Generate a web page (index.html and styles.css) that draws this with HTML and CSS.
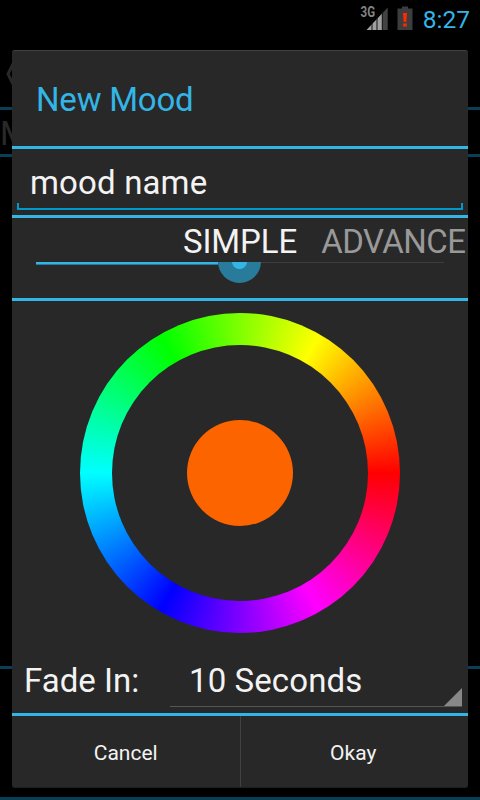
FILE: index.html
```html
<!DOCTYPE html>
<html lang="en">
<head>
<meta charset="utf-8">
<title>New Mood</title>
<link rel="stylesheet" href="styles.css">
</head>
<body>
<div class="screen">
  <div class="backdrop">
    <div class="back-bar">
      <svg width="16" height="26" viewBox="0 0 16 26"><path d="M14 1 8 13 14 25" fill="none" stroke="#292929" stroke-width="3"/></svg>
    </div>
    <div class="back-tabs">M</div>
    <div class="back-list"></div>
    <div class="back-footer"></div>
  </div>
  <header class="status">
    <svg class="signal" width="29" height="26" viewBox="0 0 29 26">
      <text x="0.500" y="11.300" class="network" textLength="14.500" lengthAdjust="spacingAndGlyphs">3G</text>
      <path d="M6.500 24 22.500 7V24Z" fill="#a0a0a0"/>
      <path d="M23 6.500 27.700 1.500V24H23Z" fill="#424242"/>
      <path d="M12 14V24M17 10V24M22.300 5V24" stroke="#111" stroke-width="1"/>
    </svg>
    <svg class="battery" width="16" height="25" viewBox="0 0 16 25">
      <path d="M.500 2.500H5V.500H11V2.500H15.500V24H.500Z" fill="#3d3d3d"/>
      <path d="M6 7H10L9.300 16H6.700ZM6.200 17.500H9.800V20.500H6.200Z" fill="#ff2a00"/>
    </svg>
    <span class="clock">8:27</span>
  </header>
  <main class="dialog">
    <h1 class="title"><span>New Mood</span></h1>
    <div class="name-row"><div class="field"><span>mood name</span></div></div>
    <div class="mode-row">
      <div class="modes"><span class="simple">SIMPLE</span><span class="advanced">ADVANCED</span></div>
      <div class="slider"><div class="progress"></div><div class="thumb"></div></div>
    </div>
    <div class="wheel-row"><div class="wheel"><div class="hole"><div class="swatch"></div></div></div></div>
    <div class="fade-row">
      <span class="fade-label">Fade In:</span>
      <div class="spinner"><span class="duration">10 Seconds</span><i class="corner"></i></div>
    </div>
    <div class="buttons"><div class="button"><span class="cancel">Cancel</span></div><div class="button"><span class="okay">Okay</span></div></div>
  </main>
</div>
</body>
</html>
```
FILE: styles.css
```css
* { box-sizing: border-box; }
body { margin: 0; background: #000; }
.screen {
  position: relative;
  width: 480px;
  height: 800px;
  overflow: hidden;
  background: #000;
  color: #f3f3f3;
  font: 33px/40px Roboto, sans-serif;
  white-space: nowrap;
}
.backdrop {
  position: absolute;
  inset: 0;
  display: flex;
  flex-direction: column;
  padding-top: 38px;
}
.backdrop > div { border-bottom: 3px solid #083f54; }
.back-bar { height: 72px; padding-top: 23px; line-height: 0; }
.back-tabs { height: 47px; line-height: 48px; color: #292929; }
.back-list { height: 512px; }
.back-footer { height: 131px; }
.status {
  position: relative;
  display: flex;
  justify-content: flex-end;
  align-items: flex-start;
  height: 38px;
  padding: 6px 10px 0 0;
}
.network { font: bold 14.5px Roboto, sans-serif; fill: #858585; }
.signal { margin-right: 8px; overflow: visible; }
.battery { margin-right: 10px; }
.clock { color: #33b5e5; font-size: 24.5px; line-height: 28px; }
.dialog {
  position: relative;
  display: flex;
  flex-direction: column;
  width: 456px;
  height: 738px;
  margin: 12px 12px 0;
  overflow: hidden;
  background: #282828;
  border-top: 1px solid #414141;
  border-bottom: 1px solid #1f1f1f;
  border-radius: 3px;
}
.dialog > * { flex: none; }
.title {
  height: 98px;
  margin: 0;
  padding: 29px 24px 0;
  border-bottom: 3px solid #33b5e5;
  font: inherit;
  letter-spacing: -0.2px;
  color: #33b5e5;
}
.name-row { height: 69px; padding: 0 5px; border-bottom: 3px solid #33b5e5; }
.field {
  height: 61px;
  padding: 14px 13px 0;
  border-bottom: 2px solid #0099cc;
  letter-spacing: 0.15px;
  background:
    linear-gradient(#0099cc, #0099cc) left bottom / 2px 5px no-repeat,
    linear-gradient(#0099cc, #0099cc) right bottom / 2px 5px no-repeat;
}
.mode-row { height: 83px; border-bottom: 3px solid #33b5e5; }
.modes { display: flex; height: 44px; padding: 4px 0 0 171px; overflow: hidden; }
.simple { margin-right: 24px; letter-spacing: -0.1px; }
.advanced { color: #999; letter-spacing: -0.5px; }
.slider {
  display: flex;
  height: 28px;
  margin: 0 24px;
  overflow: hidden;
  background: linear-gradient(#3e3e3e, #3e3e3e) left top / 409px 1px no-repeat;
}
.progress { width: 182px; height: 3px; background: #33b5e5; border-bottom: 1px solid #287b9a; }
.thumb {
  width: 43px;
  height: 43px;
  margin-top: -22px;
  border-radius: 50%;
  background: radial-gradient(circle, #33b5e5 0 7px, #287b9a 8px);
}
.wheel-row { height: 347px; padding-top: 12px; }
.wheel {
  width: 320px;
  height: 320px;
  margin: 0 auto;
  padding: 32px;
  border-radius: 50%;
  background: conic-gradient(from 90deg, #f00, #f0f, #00f, #0ff, #0f0, #ff0, #f00);
}
.hole {
  display: flex;
  align-items: center;
  justify-content: center;
  width: 256px;
  height: 256px;
  border-radius: 50%;
  background: #282828;
}
.swatch { width: 106px; height: 106px; border-radius: 50%; background: #fc6400; }
.fade-row {
  display: flex;
  height: 68px;
  padding: 0 6px 0 12px;
  border-bottom: 3px solid #33b5e5;
}
.fade-label { width: 146px; padding-top: 13px; }
.spinner {
  display: flex;
  justify-content: space-between;
  align-items: flex-end;
  width: 292px;
  height: 59px;
  padding-left: 19px;
  border-bottom: 1px solid #555;
}
.duration { height: 45px; letter-spacing: 0.1px; }
.corner { width: 18px; height: 18px; background: #888; clip-path: polygon(100% 0, 100% 100%, 0 100%); }
.buttons { display: flex; height: 71px; }
.button { flex: 1; font-size: 21px; line-height: 74px; text-align: center; }
.button + .button { border-left: 1px solid #414141; }
.okay { margin-right: 2px; }
```
